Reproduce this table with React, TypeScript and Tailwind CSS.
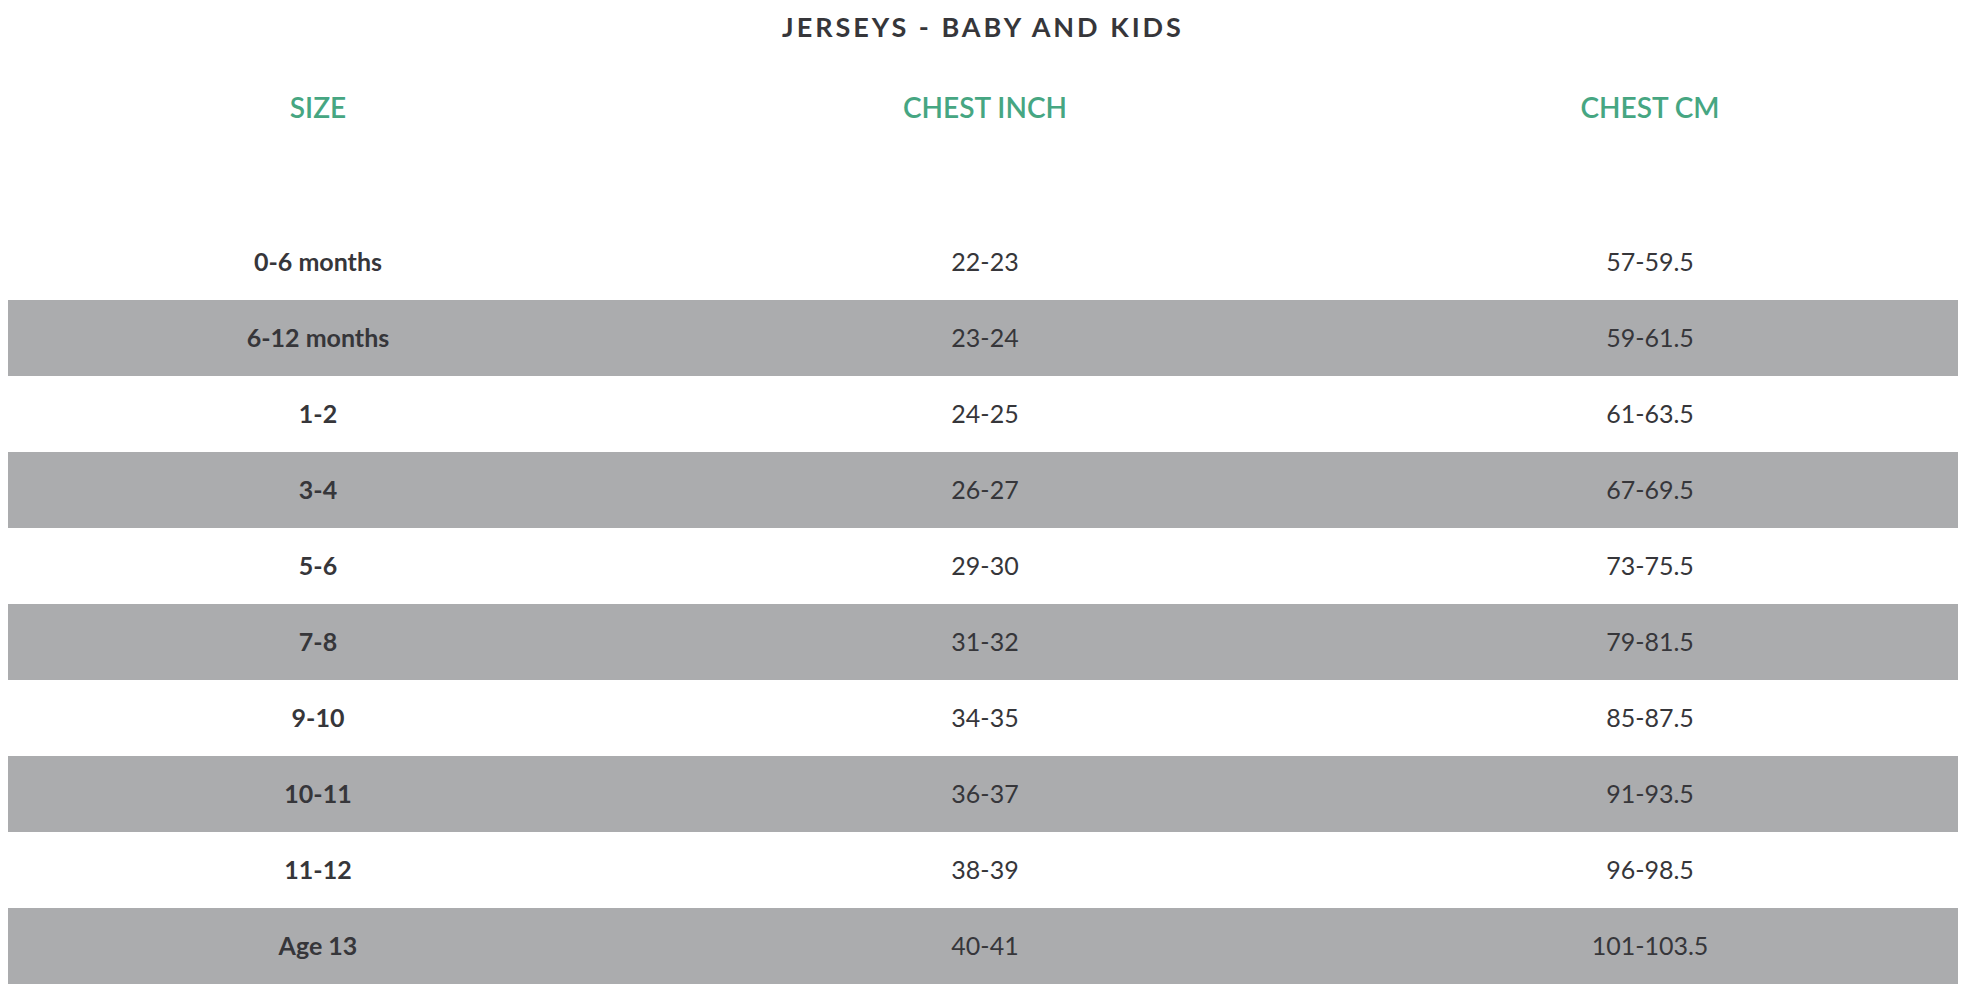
const rows = [
  { size: "0-6 months", inch: "22-23", cm: "57-59.5" },
  { size: "6-12 months", inch: "23-24", cm: "59-61.5" },
  { size: "1-2", inch: "24-25", cm: "61-63.5" },
  { size: "3-4", inch: "26-27", cm: "67-69.5" },
  { size: "5-6", inch: "29-30", cm: "73-75.5" },
  { size: "7-8", inch: "31-32", cm: "79-81.5" },
  { size: "9-10", inch: "34-35", cm: "85-87.5" },
  { size: "10-11", inch: "36-37", cm: "91-93.5" },
  { size: "11-12", inch: "38-39", cm: "96-98.5" },
  { size: "Age 13", inch: "40-41", cm: "101-103.5" },
];

export default function App() {
  return (
    <div className="min-h-screen bg-white px-2 font-['Lato',sans-serif] text-[#36363a]">
      <h1 className="flex h-[54px] items-center justify-center text-[27px] font-bold tracking-[0.11em]">
        JERSEYS - BABY AND KIDS
      </h1>

      <div className="grid h-[106px] grid-cols-[620px_714px_1fr] items-center text-center text-[28px] font-semibold text-[#46a682]">
        <div>SIZE</div>
        <div>CHEST INCH</div>
        <div>CHEST CM</div>
      </div>

      <div className="mt-[64px]">
        {rows.map((r, i) => (
          <div
            key={r.size}
            className={
              "grid h-[76px] grid-cols-[620px_714px_1fr] items-center text-center text-[25px] " +
              (i % 2 === 1 ? "bg-[#abacae]" : "bg-white")
            }
          >
            <div className="font-bold">{r.size}</div>
            <div>{r.inch}</div>
            <div>{r.cm}</div>
          </div>
        ))}
      </div>
    </div>
  );
}
